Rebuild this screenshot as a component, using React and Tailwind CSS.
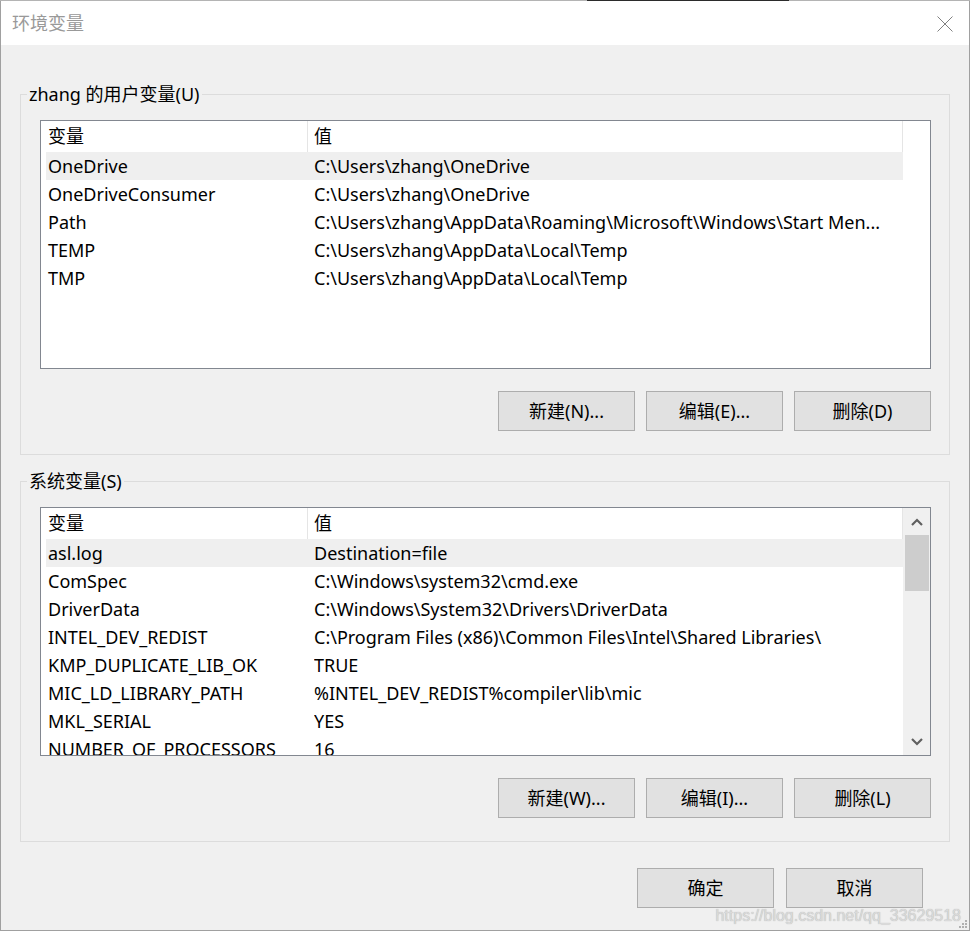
const font = { fontFamily: '"Noto Sans", "Noto Sans CJK SC", sans-serif' };

const userVars = [
  ['OneDrive', 'C:\\Users\\zhang\\OneDrive'],
  ['OneDriveConsumer', 'C:\\Users\\zhang\\OneDrive'],
  ['Path', 'C:\\Users\\zhang\\AppData\\Roaming\\Microsoft\\Windows\\Start Men...'],
  ['TEMP', 'C:\\Users\\zhang\\AppData\\Local\\Temp'],
  ['TMP', 'C:\\Users\\zhang\\AppData\\Local\\Temp'],
];

const sysVars = [
  ['asl.log', 'Destination=file'],
  ['ComSpec', 'C:\\Windows\\system32\\cmd.exe'],
  ['DriverData', 'C:\\Windows\\System32\\Drivers\\DriverData'],
  ['INTEL_DEV_REDIST', 'C:\\Program Files (x86)\\Common Files\\Intel\\Shared Libraries\\'],
  ['KMP_DUPLICATE_LIB_OK', 'TRUE'],
  ['MIC_LD_LIBRARY_PATH', '%INTEL_DEV_REDIST%compiler\\lib\\mic'],
  ['MKL_SERIAL', 'YES'],
  ['NUMBER_OF_PROCESSORS', '16'],
];

function Button({ children }) {
  return (
    <div className="w-[137px] h-[40px] flex items-center justify-center bg-[#e1e1e1] border border-[#adadad] text-[18px] text-black">
      {children}
    </div>
  );
}

function ListView({ rows, scrollbar }) {
  return (
    <div className="h-[249px] border border-[#828790] bg-white flex overflow-hidden">
      <div className="w-[862px] flex flex-col overflow-hidden">
        {/* header */}
        <div className="h-[31px] shrink-0 flex text-[18px] text-black border-r border-[#e5e5e5]">
          <div className="w-[267px] pl-[7px] border-r border-[#e5e5e5] leading-[31px]">变量</div>
          <div className="flex-1 pl-[6px] leading-[31px]">值</div>
        </div>
        {rows.map(([name, value], i) => (
          <div
            key={name}
            className={`h-[28px] shrink-0 ml-[5px] flex text-[18px] text-black leading-[28px] whitespace-nowrap ${i === 0 ? 'bg-[#efefef]' : ''}`}
          >
            <div className="w-[268px] pl-[2px]">{name}</div>
            <div className="flex-1 overflow-hidden">{value}</div>
          </div>
        ))}
      </div>
      {scrollbar ? (
        <div className="w-[27px] bg-[#f0f0f0] flex flex-col items-center">
          <div className="h-[27px] w-full flex items-center justify-center">
            <svg width="12" height="8" viewBox="0 0 12 8">
              <path d="M1 7 L6 2 L11 7" fill="none" stroke="#606060" strokeWidth="2.2" />
            </svg>
          </div>
          <div className="w-[24px] h-[56px] bg-[#cdcdcd]" />
          <div className="flex-1" />
          <div className="h-[27px] w-full flex items-center justify-center">
            <svg width="12" height="8" viewBox="0 0 12 8">
              <path d="M1 1 L6 6 L11 1" fill="none" stroke="#606060" strokeWidth="2.2" />
            </svg>
          </div>
        </div>
      ) : (
        <div className="flex-1" />
      )}
    </div>
  );
}

function Group({ title, rows, scrollbar, buttons, className = '' }) {
  return (
    <div className={`relative h-[361px] border border-[#dcdcdc] pt-[25px] pl-[19px] pr-[18px] ${className}`}>
      <span className="absolute left-[6px] -top-[13px] px-[2px] bg-[#f0f0f0] text-[18px] leading-[24px] text-black">
        {title}
      </span>
      <ListView rows={rows} scrollbar={scrollbar} />
      <div className="mt-[22px] flex justify-end gap-[11px]">
        {buttons.map((b) => (
          <Button key={b}>{b}</Button>
        ))}
      </div>
    </div>
  );
}

export default function App() {
  return (
    <div className="w-[970px] h-[931px] flex flex-col bg-white" style={font}>
      {/* top edge */}
      <div className="h-[1px] flex shrink-0">
        <div className="w-[587px] bg-[#b4b4b4]" />
        <div className="w-[202px] bg-[#2b2b2b]" />
        <div className="flex-1 bg-[#b4b4b4]" />
      </div>
      <div className="flex-1 flex flex-col border-l border-r border-b border-[#a0a0a0] relative">
        {/* title bar */}
        <div className="h-[44px] shrink-0 bg-white flex items-center justify-between pl-[11px] pr-[16px]">
          <span className="text-[18px] text-[#999999] leading-[24px]">环境变量</span>
          <svg width="16" height="16" viewBox="0 0 16 16" className="mt-[1px]">
            <path d="M0.5 0.5 L15.5 15.5 M15.5 0.5 L0.5 15.5" stroke="#808080" strokeWidth="1" fill="none" />
          </svg>
        </div>
        {/* body */}
        <div className="flex-1 bg-[#f0f0f0] px-[19px] pt-[49px]">
          <Group
            title="zhang 的用户变量(U)"
            rows={userVars}
            scrollbar={false}
            buttons={['新建(N)...', '编辑(E)...', '删除(D)']}
          />
          <Group
            className="mt-[26px]"
            title="系统变量(S)"
            rows={sysVars}
            scrollbar={true}
            buttons={['新建(W)...', '编辑(I)...', '删除(L)']}
          />
          <div className="mt-[26px] mr-[27px] flex justify-end gap-[12px]">
            <Button>确定</Button>
            <Button>取消</Button>
          </div>
        </div>
        {/* watermark */}
        <div
          className="absolute right-[8px] bottom-[6px] text-[16px] text-[#dadada] leading-none"
          style={{ fontFamily: '"Liberation Sans", Arial, sans-serif', textShadow: '0 0 1px #a8a8a8' }}
        >
          https://blog.csdn.net/qq_33629518
        </div>
        {/* resize grip */}
        <div className="absolute right-[2px] bottom-[2px] grid grid-cols-3 gap-[1px]">
          <span className="w-[2px] h-[2px]" />
          <span className="w-[2px] h-[2px]" />
          <span className="w-[2px] h-[2px] bg-[#b0b0b0]" />
          <span className="w-[2px] h-[2px]" />
          <span className="w-[2px] h-[2px] bg-[#b0b0b0]" />
          <span className="w-[2px] h-[2px] bg-[#b0b0b0]" />
          <span className="w-[2px] h-[2px] bg-[#b0b0b0]" />
          <span className="w-[2px] h-[2px] bg-[#b0b0b0]" />
          <span className="w-[2px] h-[2px] bg-[#b0b0b0]" />
        </div>
      </div>
    </div>
  );
}
